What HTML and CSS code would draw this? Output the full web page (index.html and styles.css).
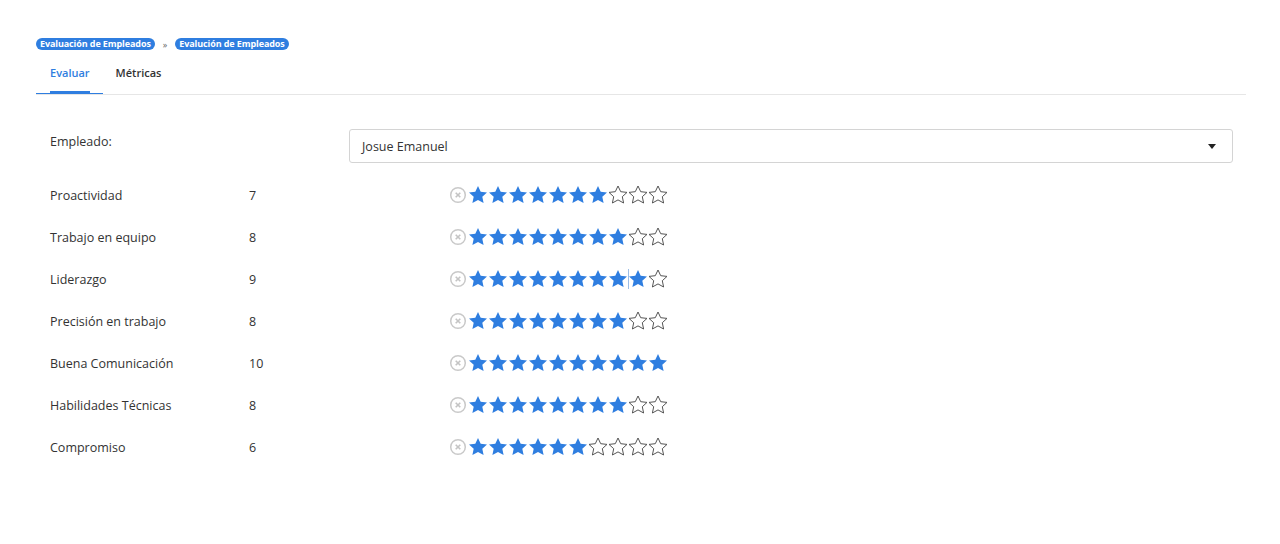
FILE: index.html
```html
<!DOCTYPE html>
<html lang="es">
<head>
<meta charset="utf-8">
<link rel="stylesheet" href="styles.css">
</head>
<body>
<svg width="0" height="0" class="defs">
  <defs>
    <path id="star" d="M10 1l2.7 5.7 6.3.7-4.7 4.3 1.3 6.3L10 14.9l-5.6 3.1 1.3-6.3L1 7.4l6.3-.7z"/>
  </defs>
</svg>
<div class="page">
  <nav class="crumbs">
    <span class="badge">Evaluación de Empleados</span>
    <span class="sep">»</span>
    <span class="badge">Evalución de Empleados</span>
  </nav>
  <div class="tabs">
    <div class="tab active"><span>Evaluar</span></div>
    <div class="tab">Métricas</div>
  </div>
  <div class="form">
    <div class="row emp">
      <div class="label">Empleado:</div>
      <div class="select">Josue Emanuel<span class="caret"></span></div>
    </div>
    <div class="row" data-v="7"><div class="label">Proactividad</div><div class="num">7</div><div class="rating"></div></div>
    <div class="row" data-v="8"><div class="label">Trabajo en equipo</div><div class="num">8</div><div class="rating"></div></div>
    <div class="row" data-v="9" data-cursor="1"><div class="label">Liderazgo</div><div class="num">9</div><div class="rating"></div></div>
    <div class="row" data-v="8"><div class="label">Precisión en trabajo</div><div class="num">8</div><div class="rating"></div></div>
    <div class="row" data-v="10"><div class="label">Buena Comunicación</div><div class="num">10</div><div class="rating"></div></div>
    <div class="row" data-v="8"><div class="label">Habilidades Técnicas</div><div class="num">8</div><div class="rating"></div></div>
    <div class="row" data-v="6"><div class="label">Compromiso</div><div class="num">6</div><div class="rating"></div></div>
  </div>
</div>
<script src="app.js"></script>
</body>
</html>
```
FILE: app.js
```js
document.querySelectorAll('.row[data-v]').forEach(function (row) {
  var v = parseInt(row.getAttribute('data-v'), 10);
  var cursor = row.getAttribute('data-cursor');
  var html = '<svg class="cancel" viewBox="0 0 18 18" width="18" height="18"><circle cx="9" cy="9" r="7.3" fill="none" stroke="#c9c9c9" stroke-width="1.5"/><path d="M6.7 6.7l4.6 4.6M11.3 6.7l-4.6 4.6" stroke="#c4c4c4" stroke-width="1.6"/></svg>';
  for (var i = 1; i <= 10; i++) {
    if (cursor && i === 9) html += '<span class="cursor"></span>';
    html += '<svg class="star ' + (i <= v ? 'on' : 'off') + '" viewBox="0 0 20 20" width="20" height="20"><use href="#star"/></svg>';
  }
  row.querySelector('.rating').innerHTML = html;
});
```
FILE: styles.css
```css
* { box-sizing: border-box; }
html, body { margin: 0; background: #fff; }
body { font-family: "Open Sans", "Noto Sans", sans-serif; color: #333; font-size: 12.5px; }
.defs { position: absolute; }
.page { padding: 38px 34px 0 36px; }
.crumbs { display: flex; align-items: center; height: 12px; }
.badge {
  background: #2f7ee0; color: #fff; font-weight: 700; font-size: 9px;
  border-radius: 7px; padding: 0 4px; height: 12px; line-height: 12px; letter-spacing: -0.1px;
}
.sep { font-size: 9px; color: #666; margin: 0 8px; }
.tabs { display: flex; margin-top: 13px; border-bottom: 1px solid #e6e6e6; }
.tab { padding: 0 14px 0 13px; height: 31px; line-height: 20px; font-size: 11px; font-weight: 600; color: #333; }
.tab.active { color: #2f7ee0; border-bottom: 1px solid #2f7ee0; height: 31px; padding: 0 13px 0 14px; }
.tab.active span { display: inline-block; height: 30px; border-bottom: 2px solid #2f7ee0; margin-bottom: -1px; }
.form { padding: 34px 13px 0 14px; }
.row { display: grid; grid-template-columns: 199px 100px 1fr; align-items: center; height: 42px; }
.row.emp { grid-template-columns: 299px 1fr; height: 33px; align-items: start; margin-bottom: 12px; }
.row.emp .label { padding-top: 4px; }
.label, .num { font-size: 12.5px; color: #333; }
.select {
  height: 34px; border: 1px solid #d4d4d4; border-radius: 3px; padding: 0 12px;
  display: flex; align-items: center; justify-content: space-between; font-size: 12.5px; color: #333;
}
.caret { width: 0; height: 0; border-left: 4.5px solid transparent; border-right: 4.5px solid transparent; border-top: 5px solid #222; margin-right: 4px; }
.rating { display: flex; align-items: center; margin-left: 100px; position: relative; }
.cancel { margin-right: 1px; }
.star { display: block; }
.star.on { fill: #2f7ee0; }
.star.off { fill: none; stroke: #555; stroke-width: 1; }
.cursor { width: 1px; height: 20px; background: #9cbde6; margin: 0 -1px 0 0; position: relative; z-index: 1; }
```
